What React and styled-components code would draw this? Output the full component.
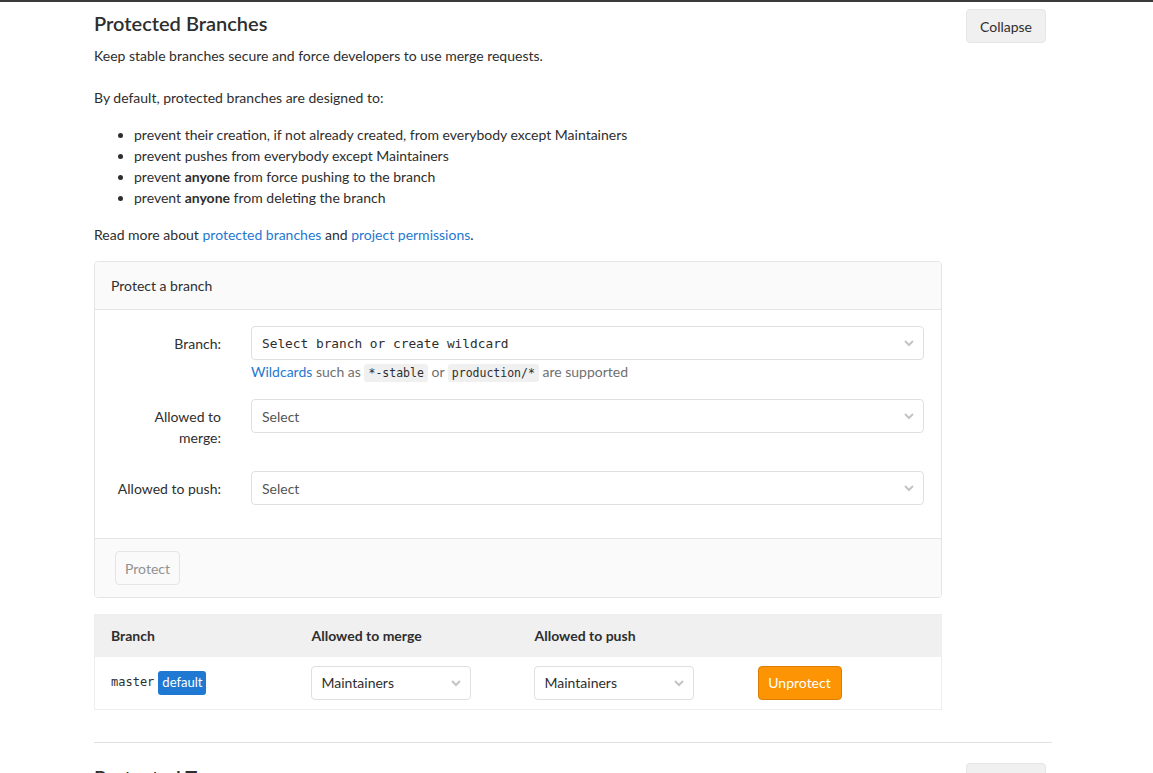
import React from "react";
import styled, { createGlobalStyle } from "styled-components";

const GlobalStyle = createGlobalStyle`
  html, body {
    margin: 0;
    padding: 0;
    background: #ffffff;
  }
  body {
    font-family: "Lato", "Noto Sans", "Liberation Sans", sans-serif;
    font-size: 14px;
    line-height: 21px;
    color: #2e2e2e;
    overflow: hidden;
  }
`;

/* ===== page frame ===== */

const TopBar = styled.div`
  height: 2px;
  background: #3a3a3a;
`;

const Page = styled.div`
  width: 958px;
  padding-left: 94px;
`;

const Section = styled.section`
  padding: ${(p) => (p.$first ? "7px" : "20px")} 0 0;
  border-top: ${(p) => (p.$first ? "none" : "1px solid #e1e1e1")};
  margin-bottom: 32px;
`;

const SectionHeader = styled.div`
  display: flex;
  justify-content: space-between;
  align-items: flex-start;
`;

const SectionTitle = styled.h4`
  margin: 0;
  font-size: 20px;
  line-height: 28px;
  font-weight: 600;
  color: #2e2e2e;
`;

const Button = styled.button`
  height: 34px;
  padding: 0 12px;
  border-radius: 4px;
  border: 1px solid #e5e5e5;
  background: #f0f0f0;
  color: #2e2e2e;
  font-family: inherit;
  font-size: 14px;
  cursor: pointer;
`;

const CollapseButton = styled(Button)`
  width: 80px;
  margin-right: 6px;
`;

const Lead = styled.p`
  margin: ${(p) => p.$m || "0"};
`;

const RuleList = styled.ul`
  margin: 16px 0;
  padding-left: 40px;
`;

const Link = styled.a`
  color: #1f78d1;
  text-decoration: none;
`;

/* ===== protect form card ===== */

const Card = styled.div`
  width: 848px;
  box-sizing: border-box;
  border: 1px solid #e5e5e5;
  border-radius: 4px;
  margin-top: 16px;
  overflow: hidden;
`;

const CardHeader = styled.div`
  height: 47px;
  padding: 0 16px;
  display: flex;
  align-items: center;
  background: #fafafa;
  border-bottom: 1px solid #e5e5e5;
`;

const CardBody = styled.div`
  padding: 16px 17px 16px 16px;
  background: #ffffff;
`;

const FormRow = styled.div`
  display: grid;
  grid-template-columns: 110px 1fr;
  column-gap: 30px;
  margin-bottom: 16px;
`;

const FieldLabel = styled.label`
  padding: 7px 0;
  text-align: right;
`;

const SelectBox = styled.div`
  height: 34px;
  box-sizing: border-box;
  border: 1px solid #dfdfdf;
  border-radius: 4px;
  background: #fff;
  display: flex;
  align-items: center;
  justify-content: space-between;
  padding: 0 8px 0 10px;
  width: ${(p) => p.$width || "auto"};
  color: ${(p) => (p.$muted ? "#555" : "#2e2e2e")};
  font-family: ${(p) =>
    p.$mono ? '"DejaVu Sans Mono", "Liberation Mono", monospace' : "inherit"};
  font-size: ${(p) => (p.$mono ? "12.8px" : "14px")};
`;

const HelpText = styled.div`
  margin-top: 2px;
  line-height: 20px;
  color: #707070;
`;

const Code = styled.code`
  font-family: "DejaVu Sans Mono", "Liberation Mono", monospace;
  font-size: 11.5px;
  background: #f0f0f0;
  color: #2e2e2e;
  border-radius: 3px;
  padding: 2px 4px;
`;

const CardFooter = styled.div`
  padding: 12px 20px;
  background: #fafafa;
  border-top: 1px solid #e5e5e5;
`;

const DisabledButton = styled(Button)`
  padding: 0 9px;
  background: #fafafa;
  color: #919191;
  cursor: not-allowed;
`;

/* ===== table ===== */

const Table = styled.table`
  width: 848px;
  margin-top: 16px;
  border-collapse: collapse;
  border: 1px solid #eeeeee;
`;

const Th = styled.th`
  text-align: left;
  font-weight: 700;
  background: #f0f0f0;
  height: 42px;
  padding: 0 16px;
  box-sizing: border-box;
  width: ${(p) => p.$w || "auto"};
`;

const Td = styled.td`
  padding: 9px 16px 9px 15px;
  vertical-align: middle;

  &:first-child {
    padding-left: 16px;
  }
`;

const BranchName = styled.code`
  font-family: "DejaVu Sans Mono", "Liberation Mono", monospace;
  font-size: 12px;
  color: #2e2e2e;
  vertical-align: middle;
`;

const Badge = styled.span`
  display: inline-block;
  margin-left: 4px;
  padding: 0 4px;
  height: 24px;
  line-height: 23px;
  border-radius: 3px;
  background: #1f78d1;
  color: #fff;
  font-size: 13px;
  vertical-align: middle;
`;

const WarnButton = styled(Button)`
  background: #fc9403;
  border-color: #de7e00;
  color: #fff;
  width: 84px;
  padding: 0;
`;

const Chevron = () => (
  <svg width="12" height="8" viewBox="0 0 12 8" aria-hidden="true">
    <path d="M2 2l4 4 4-4" fill="none" stroke="#c4c4c4" strokeWidth="2" />
  </svg>
);

export default function App() {
  return (
    <>
      <GlobalStyle />
      <TopBar />
      <Page>
        <Section $first>
          <SectionHeader>
            <SectionTitle>Protected Branches</SectionTitle>
            <CollapseButton type="button">Collapse</CollapseButton>
          </SectionHeader>
          <Lead $m="2px 0 21px">
            Keep stable branches secure and force developers to use merge requests.
          </Lead>
          <Lead>By default, protected branches are designed to:</Lead>
          <RuleList>
            <li>prevent their creation, if not already created, from everybody except Maintainers</li>
            <li>prevent pushes from everybody except Maintainers</li>
            <li>
              prevent <strong>anyone</strong> from force pushing to the branch
            </li>
            <li>
              prevent <strong>anyone</strong> from deleting the branch
            </li>
          </RuleList>
          <Lead>
            Read more about <Link href="#">protected branches</Link> and{" "}
            <Link href="#">project permissions</Link>.
          </Lead>

          <Card>
            <CardHeader>Protect a branch</CardHeader>
            <CardBody>
              <FormRow>
                <FieldLabel>Branch:</FieldLabel>
                <div>
                  <SelectBox $mono>
                    <span>Select branch or create wildcard</span>
                    <Chevron />
                  </SelectBox>
                  <HelpText>
                    <Link href="#">Wildcards</Link> such as <Code>*-stable</Code> or{" "}
                    <Code>production/*</Code> are supported
                  </HelpText>
                </div>
              </FormRow>
              <FormRow>
                <FieldLabel>Allowed to merge:</FieldLabel>
                <div>
                  <SelectBox $muted>
                    <span>Select</span>
                    <Chevron />
                  </SelectBox>
                </div>
              </FormRow>
              <FormRow>
                <FieldLabel>Allowed to push:</FieldLabel>
                <div>
                  <SelectBox $muted>
                    <span>Select</span>
                    <Chevron />
                  </SelectBox>
                </div>
              </FormRow>
            </CardBody>
            <CardFooter>
              <DisabledButton type="button" disabled>
                Protect
              </DisabledButton>
            </CardFooter>
          </Card>

          <Table>
            <thead>
              <tr>
                <Th $w="201px">Branch</Th>
                <Th $w="223px">Allowed to merge</Th>
                <Th $w="224px">Allowed to push</Th>
                <Th />
              </tr>
            </thead>
            <tbody>
              <tr>
                <Td>
                  <BranchName>master</BranchName>
                  <Badge>default</Badge>
                </Td>
                <Td>
                  <SelectBox $width="160px">
                    <span>Maintainers</span>
                    <Chevron />
                  </SelectBox>
                </Td>
                <Td>
                  <SelectBox $width="160px">
                    <span>Maintainers</span>
                    <Chevron />
                  </SelectBox>
                </Td>
                <Td>
                  <WarnButton type="button">Unprotect</WarnButton>
                </Td>
              </tr>
            </tbody>
          </Table>
        </Section>

        <Section>
          <SectionHeader>
            <SectionTitle>Protected Tags</SectionTitle>
            <CollapseButton type="button">Collapse</CollapseButton>
          </SectionHeader>
        </Section>
      </Page>
    </>
  );
}
